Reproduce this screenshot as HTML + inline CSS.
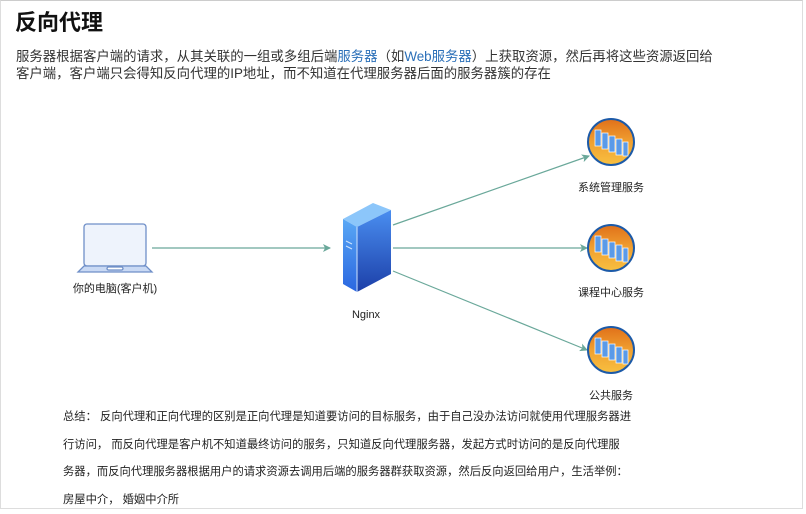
<!DOCTYPE html>
<html><head><meta charset="utf-8"><style>
body{margin:0;width:806px;height:511px;background:#fff;overflow:hidden;font-family:"Liberation Sans","Noto Sans CJK SC",sans-serif;}
.frame{position:absolute;left:0;top:0;width:801px;height:507px;border:1px solid #ddd;border-top:1px solid #ccc;}
h1{position:absolute;left:15px;top:5px;margin:0;font-size:22px;font-weight:bold;color:#111;}
.p{position:absolute;left:16px;top:48px;font-size:13.4px;line-height:17px;color:#333;white-space:nowrap}
.p b{font-weight:normal;color:#2a6fb8}
.s{position:absolute;left:63px;top:404px;font-size:11.3px;line-height:27.5px;color:#222;width:620px;white-space:nowrap}
.l{position:absolute;font-size:11px;color:#222;white-space:nowrap;transform:translateX(-50%)}
</style></head><body>
<div class="frame"></div>
<h1>反向代理</h1>
<div class="p">服务器根据客户端的请求，从其关联的一组或多组后端<b>服务器</b>（如<b>Web服务器</b>）上获取资源，然后再将这些资源返回给<br>客户端，客户端只会得知反向代理的IP地址，而不知道在代理服务器后面的服务器簇的存在</div>
<svg width="806" height="511" style="position:absolute;left:0;top:0">
<defs>
<marker id="a" markerWidth="8" markerHeight="8" refX="7" refY="4" orient="auto" markerUnits="userSpaceOnUse"><path d="M0,0 L8,4 L0,8 L2,4z" fill="#6aa89a"/></marker>
<linearGradient id="sv" x1="0" y1="0" x2="0" y2="1"><stop offset="0" stop-color="#4a8ef0"/><stop offset="1" stop-color="#1c3fa8"/></linearGradient>
<linearGradient id="sf" x1="0" y1="0" x2="0" y2="1"><stop offset="0" stop-color="#5aa8f5"/><stop offset="1" stop-color="#2a66e0"/></linearGradient>
<linearGradient id="g" x1="0" y1="0" x2="0" y2="1"><stop offset="0" stop-color="#e0701a"/><stop offset="0.5" stop-color="#f0a030"/><stop offset="1" stop-color="#f8c040"/></linearGradient>
<g id="glb"><circle r="23" fill="url(#g)" stroke="#1c5aa8" stroke-width="2"/>
<g fill="#5a9ae8" stroke="#fff" stroke-width="0.7"><rect x="-16" y="-12" width="6" height="16"/><rect x="-9" y="-9" width="6" height="16"/><rect x="-2" y="-6" width="6" height="16"/><rect x="5" y="-3" width="6" height="16"/><rect x="12" y="0" width="5" height="14"/></g></g>
</defs>
<g stroke="#6aa89a" stroke-width="1.2" fill="none" marker-end="url(#a)">
<line x1="152" y1="248" x2="330" y2="248"/>
<line x1="393" y1="225" x2="589" y2="156"/>
<line x1="393" y1="248" x2="587" y2="248"/>
<line x1="393" y1="271" x2="587" y2="350"/>
</g>
<g stroke="#6f8fc8" stroke-width="1.3" fill="#eef3fc">
<rect x="84" y="224" width="62" height="42" rx="3"/>
<path d="M84,266 L146,266 L152,272 L78,272 Z" fill="#c9d9f4"/>
<rect x="107" y="267" width="16" height="3" rx="1.5" fill="#fff"/>
</g>
<path d="M343,219 L373,203 L391,210 L357,227 Z" fill="#8cc6fa"/>
<path d="M343,219 L357,227 L357,292 L343,284 Z" fill="url(#sf)"/>
<path d="M357,227 L391,210 L391,274 L357,292 Z" fill="url(#sv)"/>
<path d="M357,227 L357,292" stroke="#cfe4ff" stroke-width="1"/>
<path d="M346,241 L352,244 M346,246 L352,249" stroke="#cfe4ff" stroke-width="1"/>
<use href="#glb" x="611" y="142"/>
<use href="#glb" x="611" y="248"/>
<use href="#glb" x="611" y="350"/>
</svg>
<div class="l" style="left:115px;top:280px">你的电脑(客户机)</div>
<div class="l" style="left:366px;top:309px">Nginx</div>
<div class="l" style="left:611px;top:179px">系统管理服务</div>
<div class="l" style="left:611px;top:284px">课程中心服务</div>
<div class="l" style="left:611px;top:387px">公共服务</div>
<div class="s">总结： 反向代理和正向代理的区别是正向代理是知道要访问的目标服务，由于自己没办法访问就使用代理服务器进<br>行访问， 而反向代理是客户机不知道最终访问的服务，只知道反向代理服务器，发起方式时访问的是反向代理服<br>务器，而反向代理服务器根据用户的请求资源去调用后端的服务器群获取资源，然后反向返回给用户，生活举例：<br>房屋中介， 婚姻中介所</div>
</body></html>
